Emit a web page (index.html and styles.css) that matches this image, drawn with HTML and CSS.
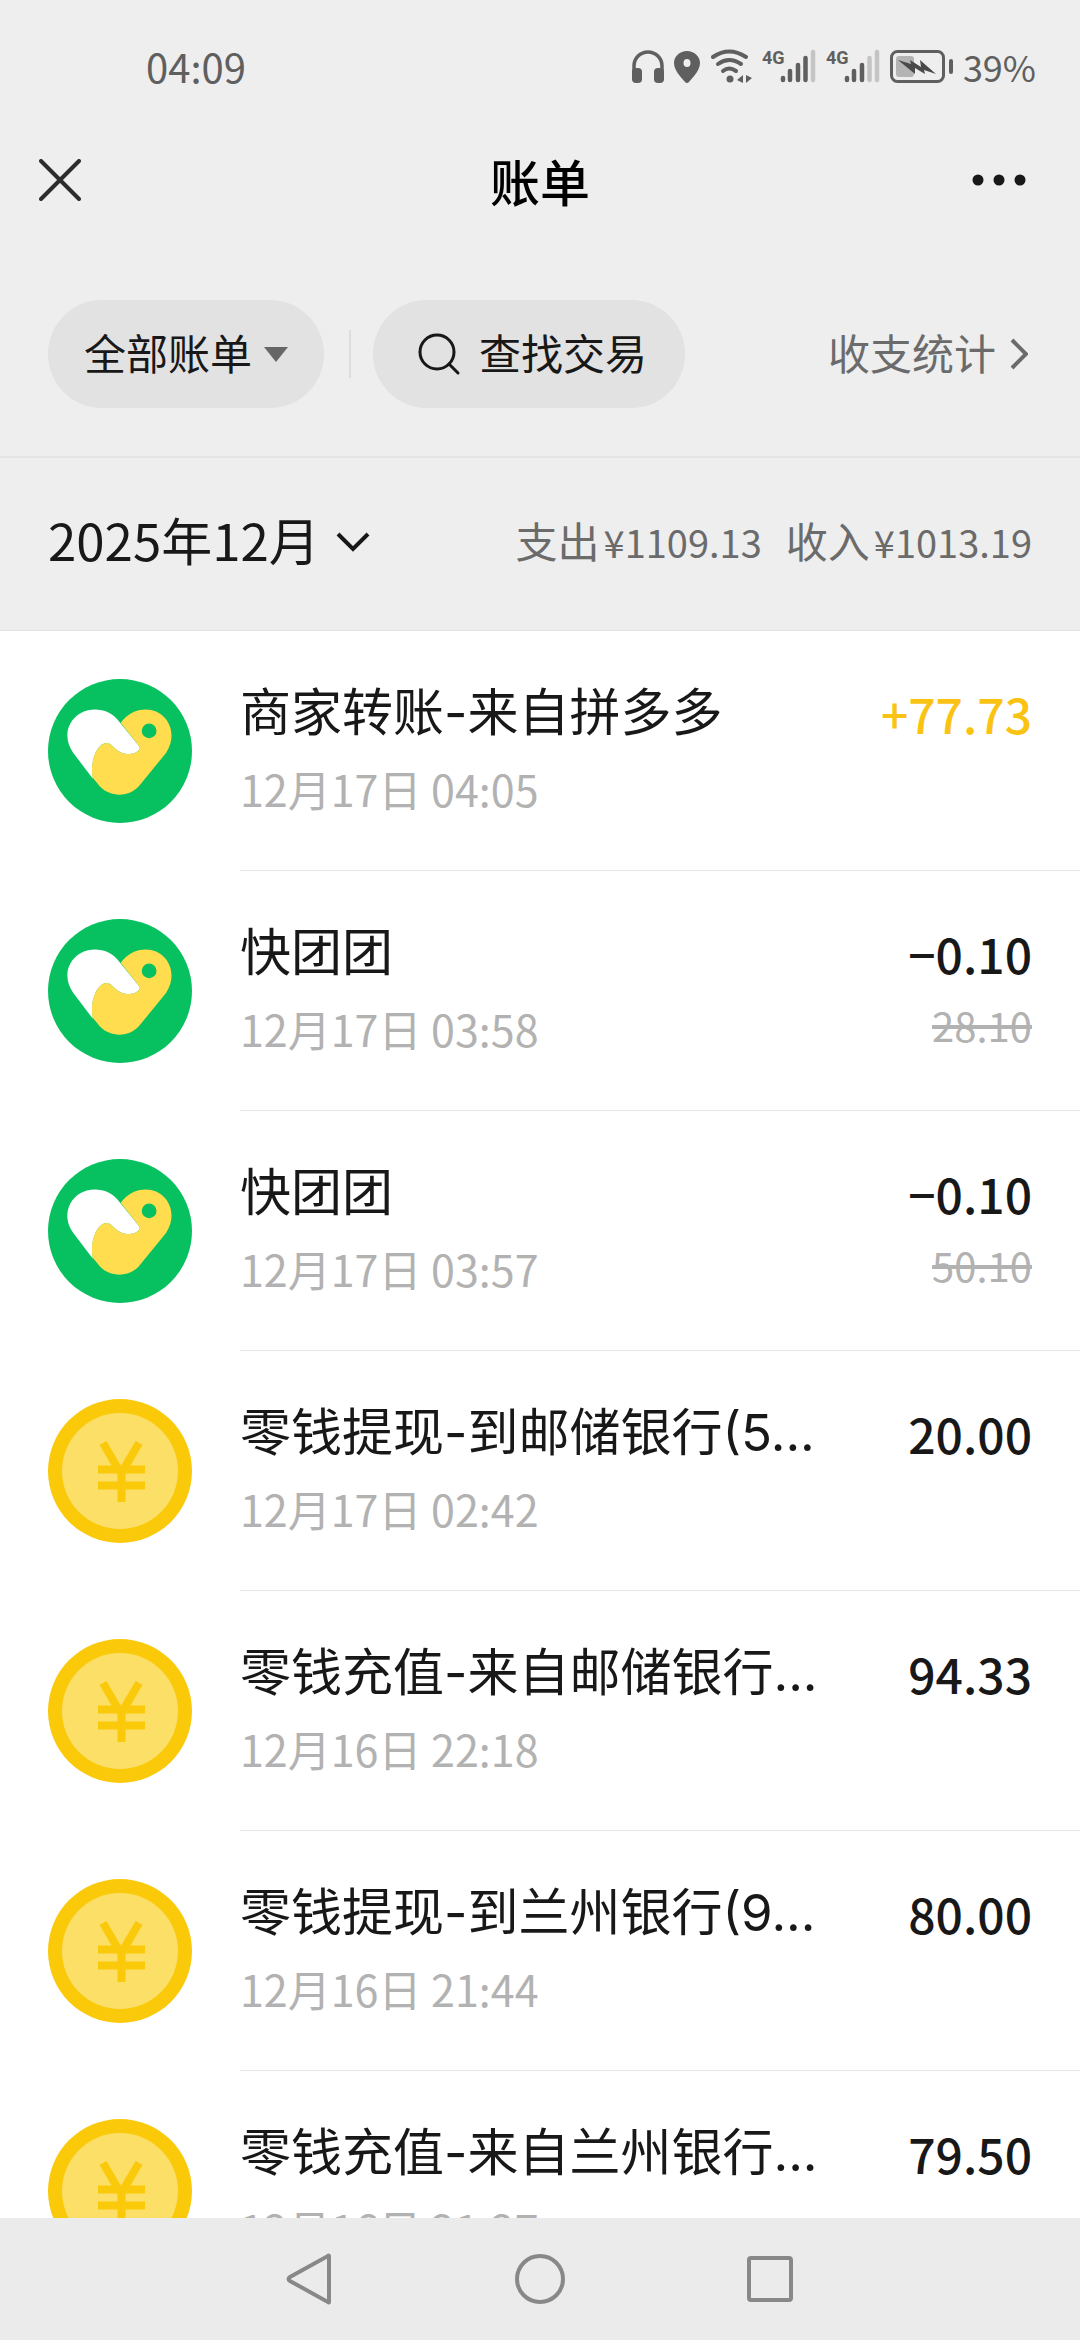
FILE: index.html
```html
<!DOCTYPE html>
<html lang="zh-CN">
<head>
  <meta charset="UTF-8" />
  <meta name="viewport" content="width=device-width, initial-scale=1" />
  <title>账单</title>
  <link rel="stylesheet" href="styles.css">
</head>
<body>
  <!-- shared shapes -->
  <svg class="sprite" aria-hidden="true">
    <symbol id="heart" viewBox="26 26 430 430">
      <circle cx="241" cy="241" r="215" fill="#07c160" />
      <path fill="#fff" d="M160 324 L101 246 C58 184 102 117 165 117 C196 117 218 129 234 148 L298 226 Q303 233 297 239 C287 250 275 251 262 250 C226 246 220 217 201 217 C176 218 150 262 160 324z" />
      <path fill="#ffdd4e" d="M243 157 C262 130 290 117 318 117 C380 117 418 185 379 246 L301 342 C272 380 213 380 182 348 L159 320 C150 262 176 218 201 217 C220 217 226 246 262 250 C275 251 287 250 297 239 Q303 233 298 226z" />
      <circle cx="328" cy="181" r="22" fill="#07c160" />
    </symbol>
    <symbol id="coin" viewBox="0 0 144 144">
      <circle cx="72" cy="72" r="72" fill="#fac90a" />
      <circle cx="72" cy="72" r="58" fill="#fcdf66" />
      <path d="M55 44 L72 73 M91 44 L74 73 M50 70.500 H97 M50 86.500 H97 M73.500 70 V103" fill="none" stroke="#fac90a" stroke-width="8" />
    </symbol>
  </svg>

  <div class="status-bar">
    <span class="time">04:09</span>
    <div class="status-icons">
      <svg width="32" height="34" viewBox="0 0 32 34" aria-hidden="true">
        <path d="M2 26 V17 A14 14 0 0 1 30 17 V26" fill="none" stroke="#5f5f5f" stroke-width="3.500" />
        <rect x="0" y="19" width="10" height="15" rx="4" fill="#5f5f5f" />
        <rect x="22" y="19" width="10" height="15" rx="4" fill="#5f5f5f" />
      </svg>
      <svg width="26" height="34" viewBox="0 0 26 34" aria-hidden="true">
        <path fill-rule="evenodd" fill="#5f5f5f" d="M13 2 C6 2 0 7 0 14 C0 21 6 27 11 33 Q13 35 15 33 C20 27 26 21 26 14 C26 7 20 2 13 2z M13 10 A3.500 4 0 0 1 13 18 A3.500 4 0 0 1 13 10z" />
      </svg>
      <svg width="42" height="34" viewBox="0 0 42 34" aria-hidden="true">
        <g fill="none" stroke="#5f5f5f" stroke-width="4" stroke-linecap="round">
          <path d="M3 8 Q19 -3 36 8" />
          <path d="M8 15 Q19 7 31 15" />
          <path d="M13 22 Q19 17 26 22" />
        </g>
        <circle cx="20" cy="30" r="3.500" fill="#5f5f5f" />
        <path d="M33 26 V34 L27 31z M36 26 V34 L42 29z" fill="#5f5f5f" />
      </svg>
      <svg width="54" height="34" viewBox="0 0 54 34" aria-label="4G">
        <text class="net" x="0" y="15">4G</text>
        <g stroke="#5f5f5f" stroke-width="4.500" stroke-linecap="round">
          <path d="M21 29 V31 M28 22 V31 M36 16 V31 M43.500 9 V31" />
          <path d="M51 3 V31" stroke="#c4c4c4" />
        </g>
      </svg>
      <svg width="54" height="34" viewBox="0 0 54 34" aria-label="4G">
        <text class="net" x="0" y="15">4G</text>
        <g stroke="#5f5f5f" stroke-width="4.500" stroke-linecap="round">
          <path d="M21 29 V31 M28 22 V31 M36 16 V31" />
          <path d="M43.500 9 V31 M51 3 V31" stroke="#c4c4c4" />
        </g>
      </svg>
      <svg width="63" height="34" viewBox="0 0 63 34" aria-hidden="true">
        <rect x="1.500" y="2.500" width="52" height="30" rx="6" fill="none" stroke="#5f5f5f" stroke-width="3" />
        <rect x="6" y="7" width="18" height="21" rx="3" fill="#b4b4b4" />
        <path d="M8 11 L21 15 L20 11 L31 18 L30 11 L46 25 L34 21 L35 25 L25 19 L25 25z" fill="#4a4a4a" />
        <path d="M61 12 V23" stroke="#5f5f5f" stroke-width="4" stroke-linecap="round" />
      </svg>
      <span class="battery">39%</span>
    </div>
  </div>

  <header class="title-bar">
    <button class="icon-btn" aria-label="关闭">
      <svg width="42" height="42" viewBox="0 0 42 42"><path d="M2 2 L40 40 M40 2 L2 40" stroke="#2c2c2c" stroke-width="4" stroke-linecap="round" /></svg>
    </button>
    <h1>账单</h1>
    <button class="icon-btn" aria-label="更多">
      <svg width="54" height="12" viewBox="0 0 54 12" fill="#181818"><circle cx="6" cy="6" r="5.500" /><circle cx="27" cy="6" r="5.500" /><circle cx="48" cy="6" r="5.500" /></svg>
    </button>
  </header>

  <div class="filters">
    <button class="pill">
      <span class="label">全部账单</span>
      <svg width="24" height="15" viewBox="0 0 24 15"><path d="M0 0 H24 L12 15z" fill="#666" /></svg>
    </button>
    <span class="separator"></span>
    <button class="pill search">
      <svg width="44" height="44" viewBox="0 0 44 44" fill="none" stroke="#181818" stroke-width="3"><circle cx="20" cy="20" r="17" /><path d="M32 32 L41 41" stroke-linecap="round" /></svg>
      <span class="label">查找交易</span>
    </button>
    <a class="stats" href="#">
      <span class="label">收支统计</span>
      <svg width="18" height="32" viewBox="0 0 18 32"><path d="M2 2 L16 16 L2 30" fill="none" stroke="#6b6b6b" stroke-width="4" /></svg>
    </a>
  </div>

  <div class="month-bar">
    <button class="month">
      <span class="label">2025年12月</span>
      <svg width="34" height="20" viewBox="0 0 34 20"><path d="M2 2 L17 17 L32 2" fill="none" stroke="#181818" stroke-width="4" /></svg>
    </button>
    <div class="totals label">
      <span class="total">支出<span class="sum">¥1109.13</span></span>
      <span class="total">收入<span class="sum">¥1013.19</span></span>
    </div>
  </div>

  <ul class="bills">
    <li class="bill">
      <svg class="avatar"><use href="#heart" /></svg>
      <div class="info">
        <div class="name">商家转账-来自拼多多</div>
        <div class="date">12月17日 04:05</div>
      </div>
      <div class="amount income">+77.73</div>
    </li>
    <li class="bill">
      <svg class="avatar"><use href="#heart" /></svg>
      <div class="info">
        <div class="name">快团团</div>
        <div class="date">12月17日 03:58</div>
      </div>
      <div class="amount">−0.10<del>28.10</del></div>
    </li>
    <li class="bill">
      <svg class="avatar"><use href="#heart" /></svg>
      <div class="info">
        <div class="name">快团团</div>
        <div class="date">12月17日 03:57</div>
      </div>
      <div class="amount">−0.10<del>50.10</del></div>
    </li>
    <li class="bill">
      <svg class="avatar"><use href="#coin" /></svg>
      <div class="info">
        <div class="name">零钱提现-到邮储银行(5...</div>
        <div class="date">12月17日 02:42</div>
      </div>
      <div class="amount">20.00</div>
    </li>
    <li class="bill">
      <svg class="avatar"><use href="#coin" /></svg>
      <div class="info">
        <div class="name">零钱充值-来自邮储银行...</div>
        <div class="date">12月16日 22:18</div>
      </div>
      <div class="amount">94.33</div>
    </li>
    <li class="bill">
      <svg class="avatar"><use href="#coin" /></svg>
      <div class="info">
        <div class="name">零钱提现-到兰州银行(9...</div>
        <div class="date">12月16日 21:44</div>
      </div>
      <div class="amount">80.00</div>
    </li>
    <li class="bill">
      <svg class="avatar"><use href="#coin" /></svg>
      <div class="info">
        <div class="name">零钱充值-来自兰州银行...</div>
        <div class="date">12月16日 21:27</div>
      </div>
      <div class="amount">79.50</div>
    </li>
  </ul>

  <nav class="system-nav" aria-label="系统导航">
    <button aria-label="返回"><svg width="50" height="54" viewBox="0 0 50 54"><path d="M44 4 V50 Q44 51 43 50 L5 29 Q2 27 5 25 L43 4 Q44 3 44 4z" /></svg></button>
    <button aria-label="主屏幕"><svg width="50" height="54" viewBox="0 0 50 54"><circle cx="25" cy="27" r="23" /></svg></button>
    <button aria-label="最近任务"><svg width="50" height="54" viewBox="0 0 50 54"><rect x="4" y="6" width="42" height="42" rx="2" /></svg></button>
  </nav>
</body>
</html>
```
FILE: styles.css
```css
* {
  box-sizing: border-box;
}
body {
  margin: 0;
  height: 100vh;
  display: flex;
  flex-direction: column;
  background: #eee;
  color: #181818;
  font-family: "Noto Sans CJK SC", sans-serif;
  font-size: 42px;
}
button {
  font: inherit;
  color: inherit;
  background: none;
  border: none;
  padding: 0;
  cursor: pointer;
}
svg {
  flex: none;
}
.sprite {
  position: absolute;
  width: 0;
  height: 0;
}
/* lifts the glyphs to the optical centre of the bar */
.label {
  padding-bottom: 6px;
}

/* status bar */
.status-bar {
  height: 132px;
  padding: 0 44px 0 146px;
  display: flex;
  align-items: center;
  justify-content: space-between;
  color: #5f5f5f;
  font-size: 40px;
}
.status-icons {
  display: flex;
  align-items: center;
  gap: 10px;
}
.net {
  font: bold 18px Roboto, sans-serif;
  fill: #5f5f5f;
}
.battery {
  font-size: 36px;
}

/* title bar */
.title-bar {
  height: 96px;
  padding: 0 54px 0 39px;
  display: grid;
  grid-template-columns: 75px 1fr 60px;
  align-items: center;
}
.title-bar h1 {
  margin: 0;
  font-size: 50px;
  font-weight: 500;
  color: #000;
  text-align: center;
}
.icon-btn {
  width: 60px;
  height: 60px;
  display: flex;
  align-items: center;
}
.icon-btn:last-child {
  justify-content: flex-end;
}

/* filters */
.filters {
  padding: 72px 52px 48px 48px;
  display: flex;
  align-items: center;
  border-bottom: 2px solid #e4e4e4;
}
.pill {
  height: 108px;
  padding: 0 36px;
  border-radius: 54px;
  background: #e2e2e2;
  display: flex;
  align-items: center;
  gap: 12px;
}
.search {
  padding: 0 38px 0 44px;
  gap: 18px;
}
.separator {
  width: 2px;
  height: 48px;
  margin: 0 22px 0 25px;
  background: #dcdcdc;
}
.stats {
  margin-left: auto;
  display: flex;
  align-items: center;
  gap: 14px;
  color: #6b6b6b;
  text-decoration: none;
}

/* month summary */
.month-bar {
  height: 173px;
  padding: 0 48px 4px;
  display: flex;
  align-items: center;
  justify-content: space-between;
  border-bottom: 1px solid #e2e2e2;
}
.month {
  display: flex;
  align-items: center;
  gap: 16px;
  font-size: 51px;
}
.totals {
  display: flex;
  gap: 24px;
  color: #6b6b6b;
}
.total {
  display: flex;
  align-items: baseline;
  gap: 4px;
}
.sum {
  font-size: 38px;
}

/* bill list */
.bills {
  flex: 1;
  min-height: 0;
  overflow: hidden;
  margin: 0;
  padding: 0;
  list-style: none;
  background: #fff;
}
.bill {
  height: 240px;
  padding: 48px 48px 0;
  display: flex;
  /* divider starts at the text column */
  background: linear-gradient(#e5e5e5, #e5e5e5) 240px 100% / 100% 1px no-repeat;
}
.avatar {
  width: 144px;
  height: 144px;
  margin-right: 48px;
}
.info {
  flex: 1;
  min-width: 0;
}
.name {
  font-family: Inter, "Noto Sans CJK SC", sans-serif;
  font-size: 51px;
  line-height: 68px;
  white-space: nowrap;
}
.date {
  margin-top: 11px;
  font-size: 43px;
  line-height: 60px;
  color: #b2b2b2;
}
.amount {
  font-size: 48px;
  font-weight: 500;
  line-height: 68px;
  text-align: right;
}
.income {
  color: #fac314;
}
.amount del {
  display: block;
  margin-top: 8px;
  font-size: 40px;
  font-weight: 400;
  line-height: 60px;
  color: #b2b2b2;
}

/* system navigation */
.system-nav {
  height: 122px;
  display: flex;
  align-items: center;
  justify-content: center;
  gap: 180px;
  background: #ebebeb;
}
.system-nav button {
  display: flex;
}
.system-nav path,
.system-nav circle,
.system-nav rect {
  fill: none;
  stroke: #888;
  stroke-width: 4;
}
```
